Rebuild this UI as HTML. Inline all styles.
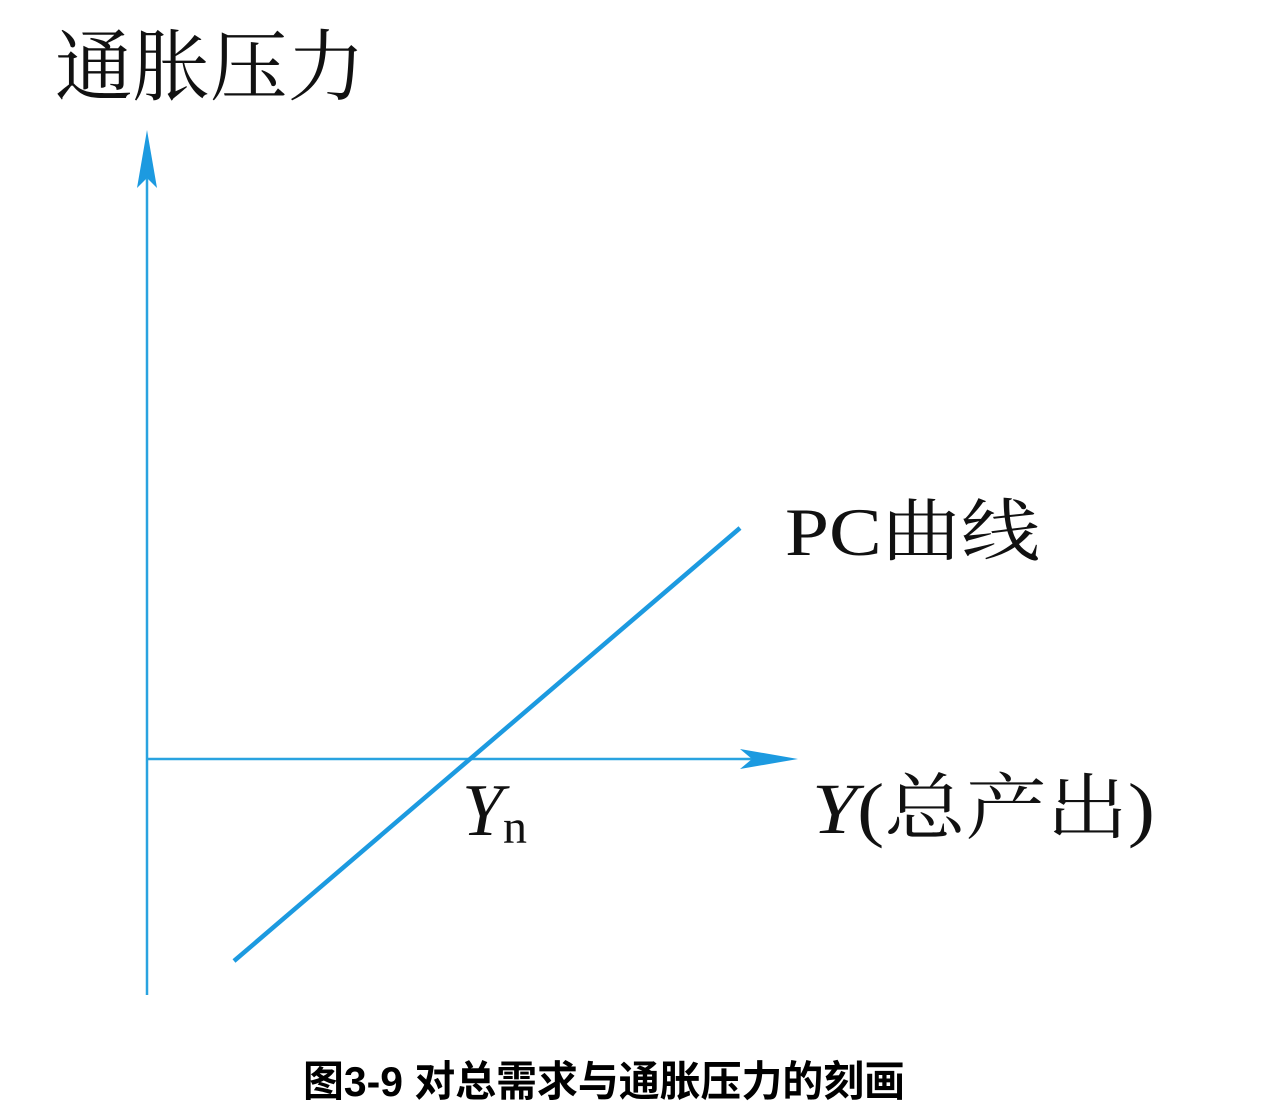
<!DOCTYPE html>
<html><head><meta charset="utf-8"><style>
html,body{margin:0;padding:0;background:#fff;}
svg{display:block;}
</style></head><body>
<svg width="1275" height="1120" viewBox="0 0 1275 1120" xmlns="http://www.w3.org/2000/svg">
<rect width="1275" height="1120" fill="#fff"/>
<g stroke="#29a3e0" stroke-width="2.5" fill="none">
<line x1="147" y1="178" x2="147" y2="995"/>
<line x1="147" y1="759" x2="755" y2="759"/>
</g>
<path d="M147 130 L157 188 L147 178 L137 188 Z" fill="#1c9ae0"/>
<path d="M798 759 L740 749 L752 759 L740 769 Z" fill="#1c9ae0"/>
<line x1="234" y1="961" x2="740" y2="528" stroke="#1c9ae0" stroke-width="4.5"/>
<g font-family="'Liberation Serif','Noto Serif CJK SC',serif" fill="#111">
<text x="55" y="94" font-size="78" textLength="310" lengthAdjust="spacingAndGlyphs">通胀压力</text>
<text x="785" y="555" font-size="68" textLength="255" lengthAdjust="spacingAndGlyphs">PC曲线</text>
<text x="462" y="835" font-size="74" font-style="italic">Y</text>
<text x="503" y="843" font-size="48">n</text>
<text x="812" y="833" font-size="72" textLength="343" lengthAdjust="spacingAndGlyphs"><tspan font-style="italic">Y</tspan>(总产出)</text>
</g>
<text x="303" y="1096" font-family="'Liberation Sans','Noto Sans CJK SC',sans-serif" font-weight="bold" font-size="42" fill="#000" textLength="602" lengthAdjust="spacingAndGlyphs">图3-9 对总需求与通胀压力的刻画</text>
</svg>
</body></html>
